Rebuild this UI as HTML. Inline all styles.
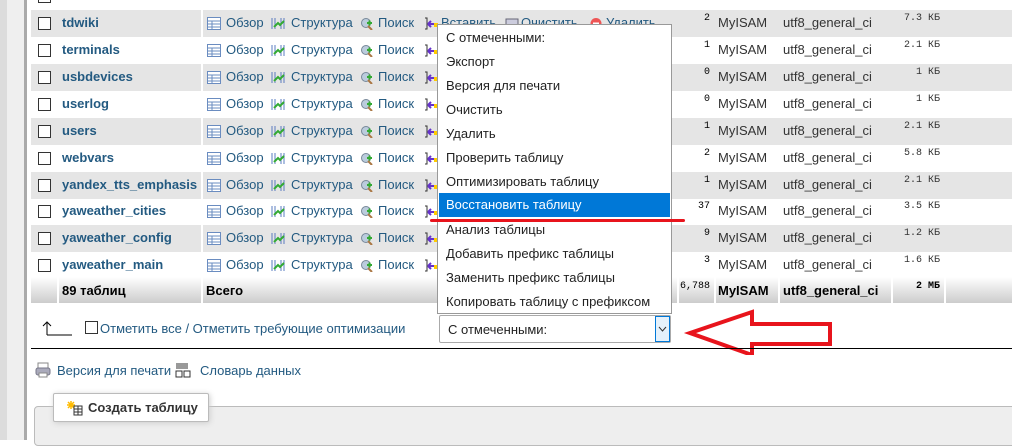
<!DOCTYPE html>
<html><head><meta charset="utf-8"><style>
*{margin:0;padding:0;box-sizing:border-box}
body{width:1012px;height:440px;overflow:hidden;background:#fff;font-family:"Liberation Sans","DejaVu Sans",sans-serif;font-size:13px;position:relative;color:#000}
.a{position:absolute;white-space:nowrap}
.row{position:absolute;left:31px;right:0;height:27px}
.g{background:#e5e5e5}
.sep{position:absolute;left:170px;top:0;width:2px;height:100%;background:#fff}
.cb{position:absolute;left:7px;top:7px;width:13px;height:13px;border:1px solid #333;background:#fff}
.nm{position:absolute;left:31px;top:5px;font-weight:bold;color:#235a81}
.lk{color:#235a81}
.ic{position:absolute;top:7px;width:14px;height:13px}
.t{position:absolute;top:5px;color:#235a81}
.num{position:absolute;right:302px;top:3px;font-family:"Liberation Mono",monospace;font-size:10px}
.eng{position:absolute;left:687px;top:5px;color:#333}
.col{position:absolute;left:752px;top:5px;color:#333}
.sz{position:absolute;right:72px;top:3px;font-family:"Liberation Mono",monospace;font-size:10px;color:#333}
.menu{position:absolute;left:437px;top:24px;width:235px;height:290px;background:#fff;border:1px solid #999;font-family:"Liberation Sans",sans-serif;font-size:13px;color:#222}
.mi{position:absolute;left:8px;height:24px;line-height:24px}
</style></head><body>
<div class="a" style="left:0;top:0;width:7px;height:440px;background:#dcdcdc"></div>
<div class="a" style="left:7px;top:0;width:17px;height:440px;background:#efefef"></div>
<div class="a" style="left:24px;top:0;width:3px;height:440px;background:#aaa"></div>

<div class="row" style="top:-17px"><div class="cb"></div></div>

<div class="row g" style="top:10px"><div class="sep"></div><div class="cb"></div><span class="nm a">tdwiki</span>
<svg class="ic" style="left:176px" viewBox="0 0 14 13"><rect x=".5" y=".5" width="13" height="12" fill="#fff" stroke="#6a8cc0"/><path d="M1 4h12M1 7h12M1 10h12M5 4v9" stroke="#6a8cc0"/></svg><span class="t" style="left:195px">Обзор</span>
<svg class="ic" style="left:240px" viewBox="0 0 14 13"><path d="M1 1v11M4 1v11M10 1v11M13 1v11" stroke="#5a7cc0"/><path d="M3 10l4-4 2 2 4-4" stroke="#3a3" stroke-width="2" fill="none"/></svg><span class="t" style="left:260px">Структура</span>
<svg class="ic" style="left:329px" viewBox="0 0 14 13"><circle cx="6" cy="6" r="4.5" fill="#bcd" stroke="#789"/><path d="M8 9l4 4" stroke="#a74" stroke-width="2"/><path d="M7 6h5M9.5 3.5v5" stroke="#3a3" stroke-width="2"/></svg><span class="t" style="left:347px">Поиск</span>
<svg class="ic" style="left:393px" viewBox="0 0 14 13"><path d="M1 1h2v11H1" stroke="#333" fill="none"/><path d="M4 7h6M4 7l3-3M4 7l3 3" stroke="#63c" stroke-width="2"/><rect x="10" y="6" width="4" height="4" fill="#fc0"/></svg><span class="t" style="left:410px">Вставить</span>
<svg class="ic" style="left:474px" viewBox="0 0 14 13"><rect x="1" y="2" width="12" height="9" fill="#ccd" stroke="#667"/></svg><span class="t" style="left:490px">Очистить</span>
<svg class="ic" style="left:558px" viewBox="0 0 14 13"><circle cx="7" cy="6.5" r="5.5" fill="#e55"/><path d="M4 6.5h6" stroke="#fff" stroke-width="2"/></svg><span class="t" style="left:575px">Удалить</span>
<span class="num">2</span><span class="eng">MyISAM</span><span class="col">utf8_general_ci</span><span class="sz">7.3 КБ</span></div>

<div class="row" style="top:37px"><div class="sep"></div><div class="cb"></div><span class="nm a">terminals</span><span class="num">1</span><span class="eng">MyISAM</span><span class="col">utf8_general_ci</span><span class="sz">2.1 КБ</span></div>
<div class="row g" style="top:64px"><div class="sep"></div><div class="cb"></div><span class="nm a">usbdevices</span><span class="num">0</span><span class="eng">MyISAM</span><span class="col">utf8_general_ci</span><span class="sz">1 КБ</span></div>
<div class="row" style="top:91px"><div class="sep"></div><div class="cb"></div><span class="nm a">userlog</span><span class="num">0</span><span class="eng">MyISAM</span><span class="col">utf8_general_ci</span><span class="sz">1 КБ</span></div>
<div class="row g" style="top:118px"><div class="sep"></div><div class="cb"></div><span class="nm a">users</span><span class="num">1</span><span class="eng">MyISAM</span><span class="col">utf8_general_ci</span><span class="sz">2.1 КБ</span></div>
<div class="row" style="top:145px"><div class="sep"></div><div class="cb"></div><span class="nm a">webvars</span><span class="num">2</span><span class="eng">MyISAM</span><span class="col">utf8_general_ci</span><span class="sz">5.8 КБ</span></div>
<div class="row g" style="top:172px"><div class="sep"></div><div class="cb"></div><span class="nm a">yandex_tts_emphasis</span><span class="num">1</span><span class="eng">MyISAM</span><span class="col">utf8_general_ci</span><span class="sz">2.1 КБ</span></div>
<div class="row" style="top:198px"><div class="sep"></div><div class="cb"></div><span class="nm a">yaweather_cities</span><span class="num">37</span><span class="eng">MyISAM</span><span class="col">utf8_general_ci</span><span class="sz">3.5 КБ</span></div>
<div class="row g" style="top:225px"><div class="sep"></div><div class="cb"></div><span class="nm a">yaweather_config</span><span class="num">9</span><span class="eng">MyISAM</span><span class="col">utf8_general_ci</span><span class="sz">1.2 КБ</span></div>
<div class="row" style="top:252px"><div class="sep"></div><div class="cb"></div><span class="nm a">yaweather_main</span><span class="num">3</span><span class="eng">MyISAM</span><span class="col">utf8_general_ci</span><span class="sz">1.6 КБ</span></div>

<div class="row" style="top:277px;height:26px;background:linear-gradient(#fff,#ccc)">
<div class="a" style="left:26px;top:0;width:2px;height:26px;background:#fff"></div>
<div class="sep"></div>
<div class="a" style="left:646px;top:0;width:2px;height:26px;background:#fff"></div>
<div class="a" style="left:683px;top:0;width:2px;height:26px;background:#fff"></div>
<div class="a" style="left:747px;top:0;width:2px;height:26px;background:#fff"></div>
<div class="a" style="left:860px;top:0;width:2px;height:26px;background:#fff"></div>
<div class="a" style="left:913px;top:0;width:2px;height:26px;background:#fff"></div>
<b class="a" style="left:31px;top:6px">89 таблиц</b><b class="a" style="left:175px;top:6px">Всего</b>
<span class="a" style="right:302px;top:4px;font-family:'Liberation Mono',monospace;font-size:10px">6,788</span>
<b class="a" style="left:687px;top:6px">MyISAM</b><b class="a" style="left:752px;top:6px">utf8_general_ci</b>
<b class="a" style="right:72px;top:4px;font-family:'Liberation Mono',monospace;font-size:10px">2 МБ</b></div>

<div id="icons"></div>

<svg class="a" style="left:42px;top:320px" width="30" height="16"><path d="M5 15V3M1 6l4-4 4 4M5 15h25" stroke="#000" fill="none"/></svg>
<div class="a" style="left:85px;top:321px;width:13px;height:13px;border:1px solid #333"></div>
<span class="a lk" style="left:100px;top:321px;font-size:13px">Отметить все / Отметить требующие оптимизации</span>
<div class="a" style="left:439px;top:315px;width:232px;height:28px;border:1px solid #aaa;border-radius:2px;background:#fff"><span class="a" style="left:8px;top:6px;font-size:13px;color:#222">С отмеченными:</span><div class="a" style="right:0;top:0;width:15px;height:26px;border:1px solid #0078d7;background:#e5f1fb"><svg width="13" height="24"><path d="M3 10l3.5 4 3.5-4" stroke="#333" fill="none"/></svg></div></div>
<svg class="a" style="left:680px;top:305px" width="160" height="50"><path d="M10 28L72 7v12h78v20H72v11z" stroke="#e8141c" stroke-width="4" fill="none" stroke-linejoin="miter"/></svg>
<div class="a" style="left:31px;top:348px;width:981px;height:1px;background:#000"></div>
<svg class="a" style="left:35px;top:362px" width="16" height="16"><rect x="3" y="1" width="10" height="5" fill="#fff" stroke="#888"/><rect x="1" y="6" width="14" height="7" rx="2" fill="#aab" stroke="#778"/><rect x="4" y="11" width="8" height="4" fill="#fff" stroke="#888"/></svg>
<span class="a lk" style="left:57px;top:363px">Версия для печати</span>
<svg class="a" style="left:175px;top:362px" width="16" height="16"><rect x="1" y="1" width="12" height="6" fill="#999"/><rect x="1" y="9" width="6" height="6" fill="#fff" stroke="#333"/><rect x="9" y="9" width="6" height="6" fill="#fff" stroke="#333"/></svg>
<span class="a lk" style="left:200px;top:363px">Словарь данных</span>
<div class="a" style="left:34px;top:406px;width:990px;height:40px;border:1px solid #bbb;border-radius:4px;background:#eee"></div>
<div class="a" style="left:53px;top:393px;width:156px;height:29px;border:1px solid #bbb;border-radius:2px;background:#fff;box-shadow:1px 1px 6px #ccc"><svg class="a" style="left:13px;top:6px" width="16" height="16"><path d="M4 1v8M0 5h8M1 2l6 6M7 2l-6 6" stroke="#fb0" stroke-width="1.5"/><rect x="7" y="6" width="8" height="9" fill="#fff" stroke="#333"/><path d="M7 9h8M7 12h8M11 6v9" stroke="#333"/></svg><b class="a" style="left:34px;top:6px;color:#333">Создать таблицу</b></div>

<div class="menu">
<div class="mi" style="top:1px">С отмеченными:</div>
<div class="mi" style="top:25px">Экспорт</div>
<div class="mi" style="top:49px">Версия для печати</div>
<div class="mi" style="top:73px">Очистить</div>
<div class="mi" style="top:97px">Удалить</div>
<div class="mi" style="top:121px">Проверить таблицу</div>
<div class="mi" style="top:145px">Оптимизировать таблицу</div>
<div class="a" style="left:1px;top:168px;width:231px;height:24px;background:#0078d7"></div>
<div class="mi" style="top:168px;color:#fff">Восстановить таблицу</div>
<div class="mi" style="top:193px">Анализ таблицы</div>
<div class="mi" style="top:217px">Добавить префикс таблицы</div>
<div class="mi" style="top:241px">Заменить префикс таблицы</div>
<div class="mi" style="top:265px">Копировать таблицу с префиксом</div>
</div>
<div class="a" style="left:430px;top:219px;width:255px;height:3px;background:#e8141c;border-radius:2px"></div>

<script>
var tops=[37,64,91,118,145,172,198,225,252];
var h='';
tops.forEach(function(t){
h+='<svg class="a" style="left:207px;top:'+(t+7)+'px" width="14" height="13"><rect x=".5" y=".5" width="13" height="12" fill="#fff" stroke="#6a8cc0"/><path d="M1 4h12M1 7h12M1 10h12M5 4v9" stroke="#6a8cc0"/></svg><span class="a lk" style="left:226px;top:'+(t+5)+'px">Обзор</span>';
h+='<svg class="a" style="left:271px;top:'+(t+7)+'px" width="14" height="13"><path d="M1 1v11M4 1v11M10 1v11M13 1v11" stroke="#5a7cc0"/><path d="M3 10l4-4 2 2 4-4" stroke="#3a3" stroke-width="2" fill="none"/></svg><span class="a lk" style="left:291px;top:'+(t+5)+'px">Структура</span>';
h+='<svg class="a" style="left:360px;top:'+(t+7)+'px" width="14" height="13"><circle cx="6" cy="6" r="4.5" fill="#bcd" stroke="#789"/><path d="M8 9l4 4" stroke="#a74" stroke-width="2"/><path d="M7 6h5M9.5 3.5v5" stroke="#3a3" stroke-width="2"/></svg><span class="a lk" style="left:378px;top:'+(t+5)+'px">Поиск</span>';
h+='<svg class="a" style="left:424px;top:'+(t+7)+'px" width="14" height="13"><path d="M1 1h2v11H1" stroke="#333" fill="none"/><path d="M4 7h6M4 7l3-3M4 7l3 3" stroke="#63c" stroke-width="2"/><rect x="10" y="6" width="4" height="4" fill="#fc0"/></svg>';
});
document.getElementById('icons').innerHTML=h;
</script>
</body></html>
